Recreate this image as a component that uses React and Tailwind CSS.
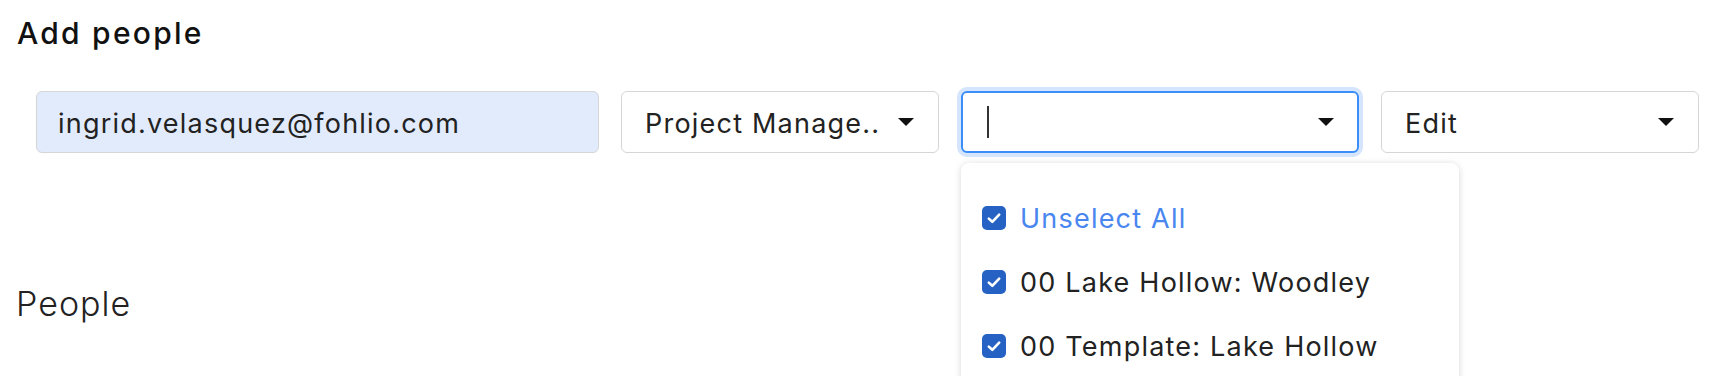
import React from "react";

function Caret() {
  return (
    <svg width="16" height="8" viewBox="0 0 16 8" className="shrink-0">
      <path d="M0 0 L16 0 L8 8 Z" fill="#111" />
    </svg>
  );
}

function Check() {
  return (
    <div className="w-[24px] h-[24px] rounded-[5px] bg-[#2562c3] flex items-center justify-center shrink-0">
      <svg width="24" height="24" viewBox="0 0 24 24">
        <path d="M6.8 12.6 L10.3 15.8 L17.2 8.6" fill="none" stroke="#fff" strokeWidth="2.6" strokeLinecap="round" strokeLinejoin="round" />
      </svg>
    </div>
  );
}

export default function App() {
  const items = [
    { label: "Unselect All", blue: true },
    { label: "00 Lake Hollow: Woodley" },
    { label: "00 Template: Lake Hollow" },
  ];
  return (
    <div className="w-[1714px] h-[376px] bg-white overflow-hidden relative font-['Inter',sans-serif] text-[#222]">
      <div className="pl-[17px] pt-[15px]">
        <h2 className="text-[30px] font-medium leading-[36px] tracking-[0.075em] text-[#111]">Add people</h2>
      </div>

      <div className="flex gap-[22px] pl-[36px] mt-[40px] text-[27px] tracking-[0.045em]">
        <div className="w-[563px] h-[62px] border border-[#d6d6d6] bg-[#e2ebfc] rounded-[6px] flex items-center pl-[21px]">
          <span className="leading-[34px] mt-[4px]">ingrid.velasquez@fohlio.com</span>
        </div>

        <div className="w-[318px] h-[62px] border border-[#d6d6d6] bg-white rounded-[6px] flex items-center justify-between pl-[23px] pr-[24px]">
          <span className="leading-[34px] mt-[4px]">Project Manage..</span>
          <Caret />
        </div>

        <div className="relative w-[398px]">
          <div className="h-[62px] border-2 border-[#3b8ef7] bg-white rounded-[6px] shadow-[0_0_0_4px_#d4e5fd] flex items-center justify-between pl-[24px] pr-[23px]">
            <div className="w-[2px] h-[32px] bg-[#333]" />
            <Caret />
          </div>
          <div className="absolute top-[72px] left-0 w-[498px] h-[300px] bg-white rounded-[8px] shadow-[0_1px_7px_rgba(0,0,0,0.16)] pt-[23px] pl-[21px] z-10">
            {items.map((it) => (
              <div key={it.label} className="h-[64px] flex items-center gap-[14px]">
                <Check />
                <span className={"leading-[34px] mt-[2px] " + (it.blue ? "text-[#4a86ef]" : "text-[#222]")}>{it.label}</span>
              </div>
            ))}
          </div>
        </div>

        <div className="w-[318px] h-[62px] border border-[#d6d6d6] bg-white rounded-[6px] flex items-center justify-between pl-[23px] pr-[24px]">
          <span className="leading-[34px] mt-[4px]">Edit</span>
          <Caret />
        </div>
      </div>

      <div className="pl-[16px] mt-[131px]">
        <h2 className="text-[34px] font-light leading-[40px] tracking-[0.03em] text-[#222]">People</h2>
      </div>
    </div>
  );
}
